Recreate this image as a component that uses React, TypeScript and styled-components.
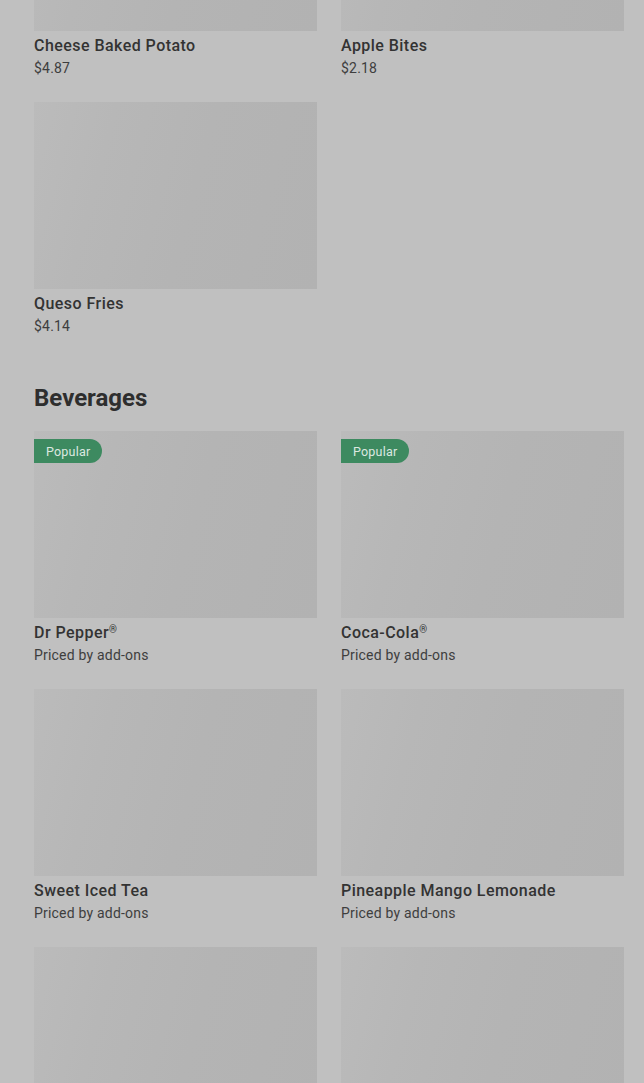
import React from "react";
import styled, { createGlobalStyle } from "styled-components";

const GlobalStyle = createGlobalStyle`
  html, body {
    margin: 0;
    padding: 0;
    background: #c0c0c0;
  }
  body {
    font-family: Roboto, "Noto Sans", "Liberation Sans", sans-serif;
    -webkit-font-smoothing: antialiased;
  }
`;

type Item = { name: string; reg?: boolean; price: string; popular?: boolean };

const sections: { title?: string; items: Item[] }[] = [
  {
    items: [
      { name: "Cheese Baked Potato", price: "$4.87" },
      { name: "Apple Bites", price: "$2.18" },
      { name: "Queso Fries", price: "$4.14" },
    ],
  },
  {
    title: "Beverages",
    items: [
      { name: "Dr Pepper", reg: true, price: "Priced by add-ons", popular: true },
      { name: "Coca-Cola", reg: true, price: "Priced by add-ons", popular: true },
      { name: "Sweet Iced Tea", price: "Priced by add-ons" },
      { name: "Pineapple Mango Lemonade", price: "Priced by add-ons" },
      { name: "", price: "" },
      { name: "", price: "" },
    ],
  },
];

const Page = styled.div`
  height: 1083px;
  overflow: hidden;
  background: #c0c0c0;
`;

// the menu is scrolled, first row of cards is cut off at the top
const Scroller = styled.main`
  margin-top: -156px;
  padding: 0 20px 0 34px;
`;

const Section = styled.section`
  & + & {
    margin-top: 46px;
  }
`;

const SectionTitle = styled.h2`
  margin: 0 0 17px;
  font-size: 24px;
  line-height: 32px;
  font-weight: 700;
  letter-spacing: 0;
  color: #2e2e2e;
`;

const Grid = styled.div`
  display: grid;
  grid-template-columns: 1fr 1fr;
  column-gap: 24px;
  row-gap: 24px;
`;

const Card = styled.div`
  display: flex;
  flex-direction: column;
`;

const Thumb = styled.div`
  position: relative;
  height: 187px;
  background: linear-gradient(
    105deg,
    #bbbbbb 0%,
    #b7b7b7 25%,
    #b4b4b4 55%,
    #b2b2b2 100%
  );
`;

const Badge = styled.span`
  position: absolute;
  top: 8px;
  left: 0;
  height: 24px;
  padding: 0 12px;
  display: flex;
  align-items: center;
  background: #3d8a60;
  color: #dce8e0;
  font-size: 12.5px;
  letter-spacing: 0.2px;
  border-radius: 0 12px 12px 0;
`;

const Name = styled.div`
  margin-top: 5px;
  font-size: 16px;
  line-height: 20px;
  font-weight: 500;
  letter-spacing: 0.45px;
  color: #333333;
  min-height: 20px;
`;

const Reg = styled.sup`
  font-size: 10px;
  line-height: 0;
  vertical-align: 5px;
  letter-spacing: 0;
`;

const Price = styled.div`
  margin-top: 2px;
  font-size: 14px;
  line-height: 20px;
  letter-spacing: 0.2px;
  color: #3e3e3e;
  min-height: 20px;
`;

export default function App() {
  return (
    <Page>
      <GlobalStyle />
      <Scroller>
        {sections.map((s, i) => (
          <Section key={i}>
            {s.title && <SectionTitle>{s.title}</SectionTitle>}
            <Grid>
              {s.items.map((it, j) => (
                <Card key={j}>
                  <Thumb>{it.popular && <Badge>Popular</Badge>}</Thumb>
                  <Name>
                    {it.name}
                    {it.reg && <Reg>®</Reg>}
                  </Name>
                  <Price>{it.price}</Price>
                </Card>
              ))}
            </Grid>
          </Section>
        ))}
      </Scroller>
    </Page>
  );
}
